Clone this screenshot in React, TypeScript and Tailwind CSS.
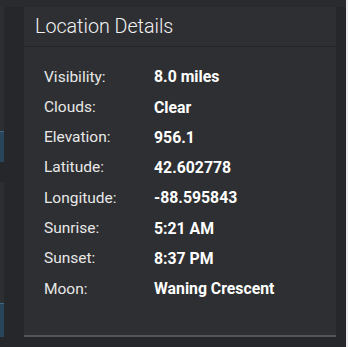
import React from "react";

const rows: [string, string][] = [
  ["Visibility:", "8.0 miles"],
  ["Clouds:", "Clear"],
  ["Elevation:", "956.1"],
  ["Latitude:", "42.602778"],
  ["Longitude:", "-88.595843"],
  ["Sunrise:", "5:21 AM"],
  ["Sunset:", "8:37 PM"],
  ["Moon:", "Waning Crescent"],
];

export default function App() {
  return (
    <div
      className="w-[348px] h-[347px] bg-[#26272a] flex overflow-hidden"
      style={{ fontFamily: "Roboto, 'Liberation Sans', sans-serif" }}
    >
      <div className="flex-1 flex flex-col">
        <div className="h-[7px] bg-[#2a2b2e]" />
        <div className="flex flex-1">
          <div className="w-[4px] flex flex-col">
            <div className="h-[155px] bg-[#2d2e31] flex flex-col justify-end">
              <div className="h-[31px] bg-[#28455a] border-t border-[#3d6a88]" />
            </div>
            <div className="h-[20px]" />
            <div className="h-[155px] bg-[#2d2e31] flex flex-col justify-end">
              <div className="h-[34px] bg-[#28455a] border-t border-[#3d6a88]" />
            </div>
          </div>
          <div className="w-[20px]" />
          <div className="w-[312px] h-[330px] bg-[#2e2f32] flex flex-col border-b-2 border-[#535457]">
            <div className="h-[40px] border-b border-[#232427] pl-[11px] flex items-center">
              <span className="text-[19.7px] font-light text-[#f2f2f2] leading-none">Location Details</span>
            </div>
            <div className="pl-[20px] pt-[15px] flex flex-col">
              {rows.map(([k, v]) => (
                <div key={k} className="h-[30.3px] flex items-center">
                  <span className="w-[110px] text-[15.5px] text-[#e8e8e8]">{k}</span>
                  <span className="text-[15.8px] font-bold text-white">{v}</span>
                </div>
              ))}
            </div>
          </div>
          <div className="w-[10px]" />
        </div>
      </div>
      <div className="w-[2px] bg-[#ececec]" />
    </div>
  );
}
